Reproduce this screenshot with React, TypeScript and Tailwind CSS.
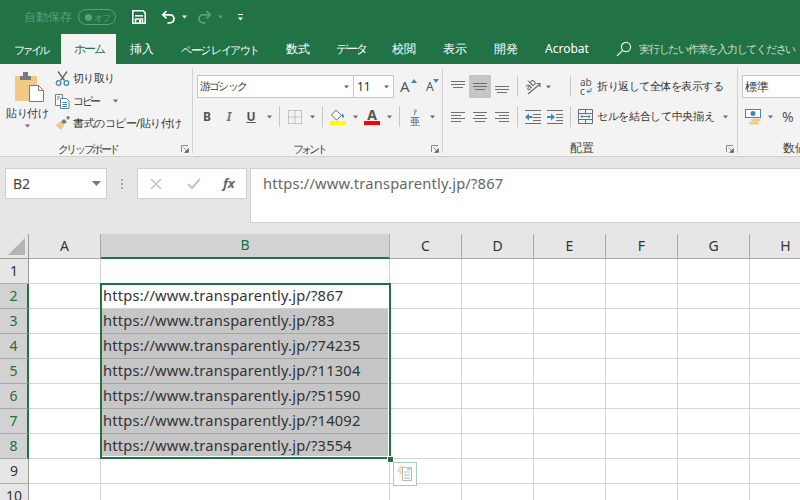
import React from "react";

const Caret = ({ className = "", color = "#6a6a6a" }: { className?: string; color?: string }) => (
  <svg width="7" height="4" viewBox="0 0 7 4" className={`shrink-0 ${className}`}><path d="M1 0.5h5L3.5 3.5z" fill={color} /></svg>
);
const VSep = ({ className = "" }: { className?: string }) => <div className={`w-px h-[21px] bg-[#c8c8c8] shrink-0 ${className}`} />;

const Launcher = () => (
  <svg width="8" height="8" viewBox="0 0 8 8" className="shrink-0">
    <path d="M0.5 7V0.5H7" fill="none" stroke="#8a8a8a" />
    <path d="M2.5 2.5l3.5 3.5M7.5 3.5v4h-4z" fill="#6a6a6a" stroke="#6a6a6a" strokeWidth="0.7" />
  </svg>
);

const Lines = ({ rows }: { rows: [number, number, number][] }) => (
  <svg width="16" height="16" viewBox="0 0 16 16" className="shrink-0">
    {rows.map(([y, x, w], i) => <rect key={i} x={x} y={y} width={w} height="1" fill="#6f6f6f" />)}
  </svg>
);

const Group = ({ w, label, labelClass, children }: { w: string; label: string; labelClass?: string; children: React.ReactNode }) => (
  <div className={`${w} shrink-0 flex flex-col h-[85px] border-r border-[#d2d2d2]`}>
    <div className="flex-1 min-h-0">{children}</div>
    <div className={`relative h-[20px] pt-[10px] flex items-center justify-center leading-none text-[#444] ${labelClass ?? ""}`}>
      {label}
      <div className="absolute right-[3px] top-[12px] tracking-normal"><Launcher /></div>
    </div>
  </div>
);

const tabs: [string, string, string][] = [
  ["ファイル", "w-[61px]", "text-[11px] tracking-[-2.75px]"],
  ["ホーム", "w-[55px]", "tracking-[-2px]"],
  ["挿入", "w-[52px]", ""],
  ["ページ レイアウト", "w-[104px]", "text-[11px] tracking-[-1.5px]"],
  ["数式", "w-[52px]", ""],
  ["データ", "w-[54px]", "tracking-[-2px]"],
  ["校閲", "w-[52px]", ""],
  ["表示", "w-[50px]", ""],
  ["開発", "w-[52px]", ""],
  ["Acrobat", "w-[70px]", ""],
];

const cols: [string, string][] = [
  ["A", "w-[72px]"], ["B", "w-[289px]"], ["C", "w-[72px]"], ["D", "w-[72px]"], ["E", "w-[72px]"], ["F", "w-[72px]"], ["G", "w-[72px]"], ["H", "w-[72px]"],
];
const urls: Record<number, string> = { 2: "867", 3: "83", 4: "74235", 5: "11304", 6: "51590", 7: "14092", 8: "3554" };

function Row({ n }: { n: number }) {
  const sel = n >= 2 && n <= 8;
  return (
    <div className="flex h-[25px] shrink-0">
      <div className={`w-[29px] shrink-0 flex items-center justify-center pb-[2px] text-[14px] border-b ${sel ? "bg-[#d2d2d2] text-[#1f6e43] border-b-[#a8a8a8] border-r-2 border-r-[#217346]" : "bg-[#e6e6e6] text-[#333] border-b-[#b0b0b0] border-r border-r-[#9a9a9a]"}`}>{n}</div>
      {cols.map(([c, w]) => {
        const isB = c === "B";
        const shaded = isB && n >= 3 && n <= 8;
        return (
          <div key={c} className={`${w} shrink-0 border-r border-b flex items-center pl-[2px] pb-[2px] overflow-hidden whitespace-nowrap text-[14.67px] tracking-[0.2px] text-[#333] ${shaded ? `bg-[#c6c6c6] border-r-[#c6c6c6] ${n === 8 ? "border-b-white" : "border-b-[#a6a6a6]"}` : "border-[#d4d4d4]"}`}>
            {isB && sel ? `https://www.transparently.jp/?${urls[n]}` : ""}
          </div>
        );
      })}
    </div>
  );
}

export default function App() {
  return (
    <div className="w-[800px] h-[500px] overflow-hidden relative bg-[#e6e6e6] flex flex-col font-['Noto_Sans_CJK_JP','Noto_Sans',sans-serif]">
      {/* Title bar */}
      <div className="h-[34px] bg-[#217346] flex items-center shrink-0">
        <span className="ml-[24px] w-[48px] text-[12px] leading-none whitespace-nowrap text-[#5f9c7d]">自動保存</span>
        <div className="ml-[6px] w-[38px] h-[16px] rounded-full border border-[#5f9c7d] flex items-center justify-between pl-[6px] pr-[4px]">
          <div className="w-[7px] h-[7px] rounded-full bg-[#5f9c7d]" />
          <span className="text-[9px] leading-none tracking-[-1.5px] pr-[2px] text-[#5f9c7d]">オフ</span>
        </div>
        <svg width="14" height="14" viewBox="0 0 14 14" className="ml-[16px]" fill="none" stroke="#fff" strokeWidth="1.6">
          <path d="M.8.8h10.4l2 2v10.4H.8z" />
          <path d="M3 5.8h8" />
          <path d="M3.5 13V9h7v4" />
          <rect x="7" y="10" width="2" height="3" fill="#fff" stroke="none" />
        </svg>
        <svg width="15" height="14" viewBox="0 0 15 14" className="ml-[15px]" fill="none" stroke="#fff" strokeWidth="1.8">
          <path d="M5.5 1.2L1.8 4.8l3.7 3.6" />
          <path d="M2 4.8h7a4 4 0 0 1 0 8H6.5" />
        </svg>
        <Caret color="#fff" className="ml-[5px]" />
        <svg width="15" height="14" viewBox="0 0 15 14" className="ml-[9px]" fill="none" stroke="#5f9c7d" strokeWidth="1.8">
          <path d="M9.5 1.2l3.7 3.6-3.7 3.6" />
          <path d="M13 4.8H6a4 4 0 0 0 0 8h2.5" />
        </svg>
        <Caret color="#5f9c7d" className="ml-[5px]" />
        <div className="ml-[13px] flex flex-col items-center gap-[2px]">
          <div className="w-[5px] h-px bg-white" />
          <Caret color="#fff" />
        </div>
      </div>

      {/* Tabs */}
      <div className="h-[30px] bg-[#217346] flex shrink-0 text-[12px] text-white">
        {tabs.map(([t, w, extra]) => (
          <div key={t} className={`${w} shrink-0 flex items-center justify-center whitespace-nowrap leading-none ${t === "ホーム" ? "bg-[#f3f3f3] text-[#217346]" : ""} ${extra}`}>{t}</div>
        ))}
        <svg width="16" height="16" viewBox="0 0 16 16" className="ml-[14px] mt-[7px] shrink-0" fill="none" stroke="#e4efe9" strokeWidth="1.2">
          <circle cx="10" cy="6" r="4.6" /><path d="M6.6 9.4L1 15" />
        </svg>
        <span className="ml-[7px] leading-[30px] whitespace-nowrap text-[11px] text-[#c9ded2] tracking-[-1.25px]">実行したい作業を入力してください</span>
      </div>

      {/* Ribbon */}
      <div className="h-[93px] bg-[#f3f3f3] border-b border-[#d0d0d0] flex shrink-0 pt-[4px] text-[11px] text-[#333] whitespace-nowrap">
        {/* Clipboard */}
        <Group w="w-[193px]" label="クリップボード" labelClass="pr-[16px] tracking-[-2.4px]">
          <div className="flex h-full">
            <div className="w-[54px] shrink-0 flex flex-col items-center pt-[4px]">
              <svg width="29" height="30" viewBox="0 0 29 30" className="ml-[4px]">
                <path d="M0 4h22v25H0z" fill="#f0c987" />
                <path d="M5 4h11v4H5z" fill="#7a7a7a" /><path d="M8 0h5v4H8z" fill="#7a7a7a" />
                <path d="M14.5 13.5h9l5 5v11h-14z" fill="#fff" stroke="#7a7a7a" />
                <path d="M23.5 13.5v5h5" fill="none" stroke="#7a7a7a" />
              </svg>
              <span className="leading-none mt-[5px] text-[#333] tracking-[-0.5px]">貼り付け</span>
              <Caret className="mt-[6px]" />
            </div>
            <div className="flex flex-col pt-[1px] gap-[3.5px] ml-[1px]">
              <div className="h-[20px] flex items-center gap-[3px]">
                <svg width="15" height="15" viewBox="0 0 15 15" fill="none">
                  <path d="M3 0.5l6.5 9M12 0.5L5.5 9.5" stroke="#6a6a6a" strokeWidth="1.4" />
                  <circle cx="3.6" cy="12" r="2.3" stroke="#3f86c4" strokeWidth="1.3" /><circle cx="11.4" cy="12" r="2.3" stroke="#3f86c4" strokeWidth="1.3" />
                </svg>
                <span className="tracking-[-0.75px]">切り取り</span>
              </div>
              <div className="h-[20px] flex items-center gap-[3px]">
                <svg width="15" height="15" viewBox="0 0 15 15" fill="#fff" stroke="#6f7f90">
                  <path d="M0.5 0.5h7v11h-7z" /><path d="M5.5 4.5h6l2.5 2.5v7.5H5.5z" />
                  <path d="M2 3h3M2 5h2M7.5 8.5h4.5M7.5 10.5h4.5M7.5 12.5h4.5" stroke="#3f86c4" />
                </svg>
                <span className="tracking-[-2.3px]">コピー</span>
                <Caret className="ml-[10px]" />
              </div>
              <div className="h-[20px] flex items-center gap-[3px]">
                <svg width="15" height="15" viewBox="0 0 15 15">
                  <path d="M9 3l3 3-3 2-3.5-2z" fill="#7a7a7a" />
                  <path d="M11 1l2.5-1 1.5 1.5-2 2.5z" fill="#7a7a7a" />
                  <path d="M5.5 5.5L9.5 9 6 14 0.5 9.5z" fill="#f0c987" />
                </svg>
                <span className="tracking-[-0.5px]">書式のコピー/貼り付け</span>
              </div>
            </div>
          </div>
        </Group>

        {/* Font */}
        <Group w="w-[250px]" label="フォント" labelClass="pr-[18px] tracking-[-3px]">
          <div className="flex flex-col pl-[4px] pt-[7px]">
            <div className="flex items-center h-[23px]">
              <div className="w-[157px] h-[23px] bg-white border border-[#c6c6c6] flex items-center justify-between pl-[2px] pr-[3px] text-[#333]">
                <span className="tracking-[-1.8px]">游ゴシック</span><Caret />
              </div>
              <div className="w-[40px] h-[23px] bg-white border border-l-0 border-[#c6c6c6] flex items-center justify-between pl-[3px] pr-[3px]">
                <span className="text-[12px]">11</span><Caret />
              </div>
              <div className="relative ml-[5px] w-[18px] text-left pl-[1px] text-[15px] leading-none text-[#555]">A
                <svg width="6" height="4" viewBox="0 0 6 4" className="absolute right-[0px] top-[0px]"><path d="M3 0l3 4H0z" fill="#3f86c4" /></svg>
              </div>
              <div className="relative ml-[4px] w-[18px] text-left pl-[5px] text-[12px] leading-none text-[#555]">A
                <svg width="6" height="4" viewBox="0 0 6 4" className="absolute right-[0px] top-[-2px]"><path d="M0 0h6L3 4z" fill="#3f86c4" /></svg>
              </div>
            </div>
            <div className="flex items-center h-[21px] mt-[8px] pl-[3px] text-[12px]">
              <span className="w-[14px] text-center font-bold text-[#555] font-['Liberation_Sans']">B</span>
              <span className="ml-[8px] w-[14px] text-center italic font-bold text-[#777] font-['Liberation_Serif']">I</span>
              <span className="ml-[8px] w-[14px] text-center font-bold underline text-[#555] font-['Liberation_Sans']">U</span>
              <Caret className="ml-[8px]" />
              <VSep className="ml-[6px]" />
              <svg width="14" height="14" viewBox="0 0 14 14" className="ml-[8px]" fill="none" stroke="#9a9a9a" strokeDasharray="1 1">
                <path d="M.5.5h13M.5 13.5h13M.5.5v13M13.5.5v13M7 .5v13M.5 7h13" />
              </svg>
              <Caret className="ml-[7px]" />
              <VSep className="ml-[6px]" />
              <div className="ml-[7px] w-[16px] flex flex-col items-center">
                <svg width="14" height="12" viewBox="0 0 14 12" fill="none">
                  <path d="M5 1l5.5 5.5L5.5 11 .5 6z" stroke="#6a6a6a" fill="#fff" />
                  <path d="M11.5 5c1.5 2 1.5 3 .7 3.5C11.5 8.5 11 7 11.5 5z" fill="#3f86c4" stroke="#3f86c4" />
                </svg>
                <div className="w-[16px] h-[4px] bg-[#ffff00]" />
              </div>
              <Caret className="ml-[6px]" />
              <div className="ml-[5px] w-[16px] flex flex-col items-center">
                <span className="text-[14px] leading-[12px] font-bold text-[#555] font-['Liberation_Sans']">A</span>
                <div className="w-[16px] h-[4px] bg-[#ff0000]" />
              </div>
              <Caret className="ml-[6px]" />
              <VSep className="ml-[6px]" />
              <div className="ml-[9px] w-[12px] flex flex-col items-center text-[#555]">
                <span className="text-[8px] leading-[8px]">ｱ</span>
                <span className="text-[10px] leading-[10px]">亜</span>
              </div>
              <Caret className="ml-[8px]" />
            </div>
          </div>
        </Group>

        {/* Alignment */}
        <Group w="w-[295px]" label="配置" labelClass="pr-[16px] text-[12px]">
          <div className="flex pl-[4px] pt-[7px] h-full">
            <div className="flex flex-col">
              <div className="flex items-center h-[23px]">
                <div className="w-[22px] flex justify-center"><Lines rows={[[2, 1, 14], [5, 1, 14], [8, 3, 10]]} /></div>
                <div className="w-[22px] h-[23px] bg-[#c6c6c6] flex justify-center items-center"><Lines rows={[[4, 1, 14], [7, 1, 14], [10, 3, 10]]} /></div>
                <div className="w-[22px] flex justify-center"><Lines rows={[[7, 1, 14], [10, 1, 14], [13, 3, 10]]} /></div>
                <VSep className="ml-[4px]" />
                <div className="relative ml-[7px] w-[16px] h-[16px] shrink-0">
                  <span className="absolute left-[-1px] top-[0px] -rotate-45 text-[10px] leading-[10px] text-[#555] font-['Liberation_Sans']">ab</span>
                  <svg width="16" height="16" viewBox="0 0 16 16" className="absolute left-0 top-0" fill="none" stroke="#6a6a6a" strokeWidth="1.2">
                    <path d="M3 15L15 5M11.5 4.5H15V8" />
                  </svg>
                </div>
                <Caret className="ml-[4px]" />
                <VSep className="ml-[18px]" />
                <div className="ml-[9px] w-[12px] flex flex-col text-[10px] leading-[9px] text-[#555] font-['Liberation_Sans']">
                  <span>ab</span>
                  <span className="flex items-center">c
                    <svg width="6" height="6" viewBox="0 0 6 6" fill="none" stroke="#3f86c4" className="ml-[1px]"><path d="M5 0v3.5H1M3 1.5l-2 2 2 2" /></svg>
                  </span>
                </div>
                <span className="ml-[5px] w-[128px] tracking-[-0.5px]">折り返して全体を表示する</span>
              </div>
              <div className="flex items-center h-[21px] mt-[8px]">
                <div className="w-[22px] flex justify-center"><Lines rows={[[3, 1, 14], [6, 1, 10], [9, 1, 14], [12, 1, 10]]} /></div>
                <div className="w-[22px] flex justify-center"><Lines rows={[[3, 1, 14], [6, 3, 10], [9, 1, 14], [12, 3, 10]]} /></div>
                <div className="w-[22px] flex justify-center"><Lines rows={[[3, 1, 14], [6, 5, 10], [9, 1, 14], [12, 5, 10]]} /></div>
                <VSep className="ml-[4px]" />
                <svg width="16" height="14" viewBox="0 0 16 14" className="ml-[7px]">
                  <path d="M0 7l4-3.5v7z" fill="#3f86c4" /><path d="M4 6h3.5v2H4z" fill="#3f86c4" />
                  <path d="M0 .5h16M8 4.5h8M8 7.5h8M8 10.5h8M0 13.5h16" stroke="#6f6f6f" />
                </svg>
                <svg width="16" height="14" viewBox="0 0 16 14" className="ml-[6px]">
                  <path d="M8 7L4 3.5v7z" fill="#3f86c4" /><path d="M0 6h4v2H0z" fill="#3f86c4" />
                  <path d="M0 .5h16M9 4.5h7M9 7.5h7M9 10.5h7M0 13.5h16" stroke="#6f6f6f" />
                </svg>
                <VSep className="ml-[7px]" />
                <svg width="15" height="15" viewBox="0 0 15 15" className="ml-[7px]" fill="none" stroke="#6f6f6f">
                  <path d="M.5.5h14v14H.5zM.5 4.5h14M.5 10.5h14M7.5.5v4M7.5 10.5v4" />
                  <path d="M3 7.5h9M4.5 6L3 7.5 4.5 9M10.5 6L12 7.5 10.5 9" stroke="#3f86c4" />
                </svg>
                <span className="ml-[4px] w-[117px] tracking-[-0.35px]">セルを結合して中央揃え</span>
                <Caret className="ml-[8px]" />
              </div>
            </div>
          </div>
        </Group>

        {/* Number */}
        <div className="flex-1 flex flex-col pl-[4px] pt-[7px] h-[85px]">
          <div className="h-[23px] bg-white border-y border-l border-[#c6c6c6] flex items-center pl-[2px] text-[12px] text-[#333]">標準</div>
          <div className="flex items-center h-[21px] mt-[8px] pl-[3px]">
            <svg width="17" height="16" viewBox="0 0 17 16">
              <rect x="0.5" y="0.5" width="15" height="8" fill="#fff" stroke="#3f86c4" />
              <circle cx="8" cy="4.5" r="2.5" fill="#3f86c4" />
              <ellipse cx="11" cy="11" rx="5" ry="1.6" fill="#f0c987" />
              <ellipse cx="9" cy="14" rx="5" ry="1.6" fill="#f0c987" />
            </svg>
            <Caret className="ml-[5px]" />
            <span className="ml-[8px] text-[14px] text-[#555] leading-none font-['Liberation_Sans']">%</span>
          </div>
          <div className="mt-auto h-[10px] flex items-center leading-none text-[12px] text-[#444] pl-[41px]">数値</div>
        </div>
      </div>

      {/* Formula bar */}
      <div className="h-[77px] shrink-0 flex items-start pl-[5px] pt-[11px]">
        <div className="w-[102px] h-[31px] bg-white border border-[#cfcfcf] flex items-center justify-between pl-[7px] pr-[5px] text-[14px] text-[#444]">
          B2
          <svg width="9" height="5" viewBox="0 0 9 5" className="shrink-0"><path d="M0 0h9L4.5 5z" fill="#7a7a7a" /></svg>
        </div>
        <div className="w-[30px] h-[31px] flex flex-col items-center justify-center gap-[2px] shrink-0">
          {[0, 1, 2].map((i) => <div key={i} className="w-[2px] h-[2px] bg-[#a8a8a8]" />)}
        </div>
        <div className="w-[110px] h-[31px] bg-white border border-[#cfcfcf] flex items-center shrink-0">
          <svg width="12" height="12" viewBox="0 0 12 12" className="ml-[12px]" stroke="#c4c4c4" strokeWidth="1.6"><path d="M1 1l10 10M11 1L1 11" /></svg>
          <svg width="14" height="12" viewBox="0 0 14 12" className="ml-[25px]" fill="none" stroke="#c4c4c4" strokeWidth="2"><path d="M1 6l4 4 8-9" /></svg>
          <span className="ml-[22px] font-['Liberation_Serif'] italic font-bold text-[13px] leading-none text-[#666]">fx</span>
        </div>
        <div className="ml-[3px] flex-1 h-[55px] bg-white border-l border-t border-b border-[#cfcfcf] pl-[12px] pt-[3px] text-[14.67px] tracking-[0.2px] text-[#666] whitespace-nowrap">https://www.transparently.jp/?867</div>
      </div>

      {/* Grid */}
      <div className="flex-1 min-h-0 bg-white overflow-hidden">
        <div className="flex h-[25px] bg-[#e6e6e6]">
          <div className="w-[29px] shrink-0 border-r border-b border-[#9a9a9a] flex items-end justify-end pr-[3px] pb-[3px]">
            <svg width="17" height="17" viewBox="0 0 17 17"><path d="M17 0v17H0z" fill="#b4b4b4" /></svg>
          </div>
          {cols.map(([c, w]) => (
            <div key={c} className={`${w} shrink-0 flex items-center justify-center pb-[2px] text-[14px] border-r ${c === "B" ? "bg-[#d2d2d2] text-[#1f6e43] border-b-2 border-b-[#217346] border-r-[#b0b0b0]" : "text-[#333] border-b border-[#a8a8a8]"}`}>{c}</div>
          ))}
        </div>
        {[1, 2, 3, 4, 5, 6, 7, 8, 9, 10].map((n) => <Row key={n} n={n} />)}
      </div>

      {/* Selection overlay */}
      <div className="absolute left-[100px] top-[283px] w-[291px] h-[176px] border-2 border-[#217346] pointer-events-none shadow-[inset_-1px_-1px_0_#fff]" />
      <div className="absolute left-[387px] top-[456px] w-[5px] h-[5px] bg-[#217346] border border-white box-content" />
      <div className="absolute left-[393px] top-[462px] w-[24px] h-[24px] bg-white border border-[#a9cdb9] flex items-center justify-center">
        <svg width="16" height="16" viewBox="0 0 16 16">
          <path d="M3 0h3L4 5h3L2 10l1-4H0z" fill="#f3d9b5" />
          <rect x="5.5" y="1.5" width="9" height="13" fill="#fff" stroke="#b8b8b8" />
          <path d="M7 6h6M7 9h6M7 12h6" stroke="#9cc4ae" />
          <rect x="10" y="1" width="5" height="3" fill="#c8c8c8" />
        </svg>
      </div>
    </div>
  );
}
